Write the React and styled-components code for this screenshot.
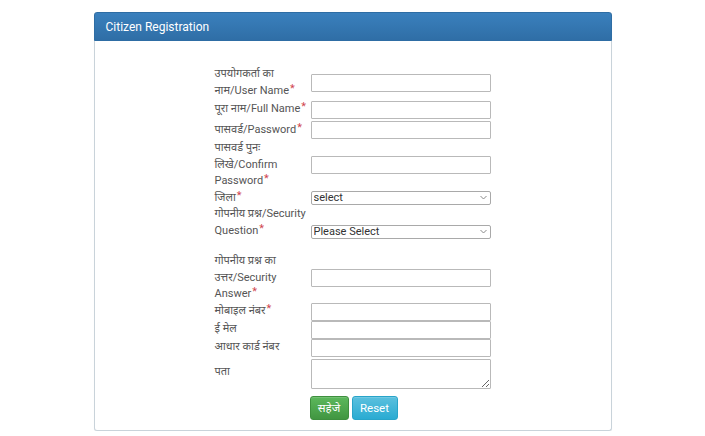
import React from 'react'
import styled, { createGlobalStyle } from 'styled-components'

const GlobalStyle = createGlobalStyle`
  html, body {
    margin: 0;
    padding: 0;
    background: #fff;
  }
  body {
    font-family: Roboto, "Noto Sans", "Noto Sans Devanagari", "Liberation Sans", sans-serif;
    color: #555;
  }
`

const Page = styled.div`
  width: 705px;
  padding-top: 12px;
  display: flex;
  justify-content: center;
`

const Panel = styled.section`
  width: 518px;
  box-sizing: border-box;
  border: 1px solid #c9d3da;
  border-top: none;
  border-radius: 3px;
  background: #fff;
  box-shadow: 0 1px 1px rgba(0, 0, 0, 0.05);
`

const Heading = styled.header`
  height: 29px;
  box-sizing: border-box;
  padding: 0 11px;
  display: flex;
  align-items: center;
  margin: 0 -1px;
  border: 1px solid #2e6da4;
  border-radius: 3px 3px 0 0;
  background: linear-gradient(#3a80bd, #2f6ea6);
  color: #fff;
  font-size: 12px;
`

const Body = styled.div`
  padding: 25px 0 10px;
  display: flex;
  flex-direction: column;
  align-items: center;
`

const Row = styled.div`
  display: grid;
  grid-template-columns: 96px 180px;
  align-items: ${p => (p.$end ? 'end' : 'center')};
  min-height: ${p => p.$min || 0}px;
  margin-bottom: ${p => p.$after || 0}px;
`

const Label = styled.label`
  display: flex;
  flex-direction: column;
  font-size: 11px;
  color: #555;
`

const Line = styled.span`
  display: block;
  height: 16.5px;
  line-height: 16.5px;
  white-space: nowrap;
`

const Req = styled.span`
  position: relative;
  top: -2px;
  margin-left: 1px;
  color: #d0454f;
  font-size: 11px;
`

const TextBox = styled.input`
  display: block;
  width: 180px;
  height: 18px;
  box-sizing: border-box;
  margin: 0;
  border: 1px solid #b9b9b9;
  border-radius: 1px;
  background: #fff;
  font-size: 11px;
`

const SelectWrap = styled.div`
  position: relative;
  width: 180px;
  height: 14px;
`

const Select = styled.select`
  display: block;
  width: 100%;
  height: 100%;
  box-sizing: border-box;
  margin: 0;
  padding: 0 2px;
  border: 1px solid #a9a9a9;
  border-radius: 2px;
  background: #fff;
  color: #333;
  font-family: Roboto, "Noto Sans", sans-serif;
  font-size: 11px;
  line-height: 12px;
  appearance: none;
  -webkit-appearance: none;
`

const Chevron = styled.svg`
  position: absolute;
  right: 4px;
  top: 4px;
  width: 7px;
  height: 5px;
  pointer-events: none;
`

const TextArea = styled.textarea`
  display: block;
  width: 180px;
  height: 30px;
  box-sizing: border-box;
  margin: 2px 0 0;
  border: 1px solid #b9b9b9;
  border-radius: 1px;
  resize: vertical;
`

const Actions = styled.div`
  width: 276px;
  padding-left: 95px;
  box-sizing: border-box;
  margin-top: 7px;
  display: flex;
  gap: 3px;
`

const Button = styled.button`
  height: 24px;
  width: ${p => p.$w}px;
  padding: 0;
  border: 1px solid ${p => (p.$kind === 'success' ? '#3e8f3e' : '#28a4c9')};
  border-radius: 3px;
  background: ${p =>
    p.$kind === 'success'
      ? 'linear-gradient(#5cb85c, #419641)'
      : 'linear-gradient(#5bc0de, #2aabd2)'};
  color: #fff;
  font-family: Roboto, "Noto Sans", sans-serif;
  font-size: 11.5px;
  box-shadow: inset 0 1px 0 rgba(255, 255, 255, 0.15);
`

const Field = ({ lines, required }) => (
  <Label>
    {lines.map((text, i) => (
      <Line key={i}>
        {text}
        {required && i === lines.length - 1 && <Req>*</Req>}
      </Line>
    ))}
  </Label>
)

const Dropdown = ({ value }) => (
  <SelectWrap>
    <Select defaultValue={value}>
      <option value={value}>{value}</option>
    </Select>
    <Chevron viewBox="0 0 7 5">
      <path d="M0.5 1 L3.5 4 L6.5 1" fill="none" stroke="#8a8a8a" strokeWidth="1" />
    </Chevron>
  </SelectWrap>
)

export default function App() {
  return (
    <>
      <GlobalStyle />
      <Page>
        <Panel>
          <Heading>Citizen Registration</Heading>
          <Body>
            <Row>
              <Field required lines={['उपयोगकर्ता का', 'नाम/User Name']} />
              <TextBox type="text" />
            </Row>
            <Row $min={21}>
              <Field required lines={['पूरा नाम/Full Name']} />
              <TextBox type="text" />
            </Row>
            <Row $min={20}>
              <Field required lines={['पासवर्ड/Password']} />
              <TextBox type="password" />
            </Row>
            <Row>
              <Field required lines={['पासवर्ड पुनः', 'लिखे/Confirm', 'Password']} />
              <TextBox type="password" />
            </Row>
            <Row>
              <Field required lines={['जिला']} />
              <Dropdown value="select" />
            </Row>
            <Row $end $after={14}>
              <Field required lines={['गोपनीय प्रश्न/Security', 'Question']} />
              <Dropdown value="Please Select" />
            </Row>
            <Row>
              <Field required lines={['गोपनीय प्रश्न का', 'उत्तर/Security', 'Answer']} />
              <TextBox type="text" />
            </Row>
            <Row>
              <Field required lines={['मोबाइल नंबर']} />
              <TextBox type="text" />
            </Row>
            <Row>
              <Field lines={['ई मेल']} />
              <TextBox type="text" />
            </Row>
            <Row>
              <Field lines={['आधार कार्ड नंबर']} />
              <TextBox type="text" />
            </Row>
            <Row>
              <Field lines={['पता']} />
              <TextArea />
            </Row>
            <Actions>
              <Button $kind="success" $w={39}>सहेजे</Button>
              <Button $kind="info" $w={46}>Reset</Button>
            </Actions>
          </Body>
        </Panel>
      </Page>
    </>
  )
}
